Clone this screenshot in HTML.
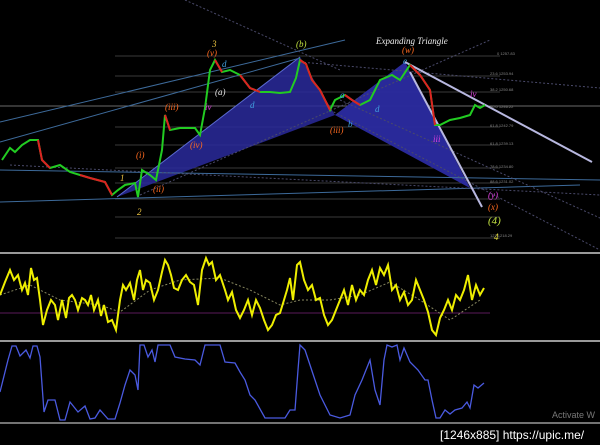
<!DOCTYPE html>
<html><head><meta charset="utf-8"><style>
html,body{margin:0;padding:0;background:#000;}
svg{display:block;font-family:"Liberation Serif",serif;}
</style></head><body>
<svg width="600" height="445" viewBox="0 0 600 445" xmlns="http://www.w3.org/2000/svg">
<rect width="600" height="445" fill="#000"/>
<!-- fib horizontal lines -->
<g stroke="#3a3a3a" stroke-width="1">
<line x1="115" y1="56" x2="500" y2="56"/>
<line x1="115" y1="76" x2="500" y2="76"/>
<line x1="115" y1="92" x2="500" y2="92"/>
<line x1="115" y1="127" x2="500" y2="127"/>
<line x1="115" y1="145" x2="500" y2="145"/>
<line x1="115" y1="168" x2="500" y2="168"/>
<line x1="115" y1="183" x2="500" y2="183"/>
<line x1="115" y1="199" x2="500" y2="199"/>
<line x1="115" y1="217" x2="500" y2="217"/>
<line x1="115" y1="238" x2="500" y2="238"/>
</g>
<line x1="0" y1="106" x2="600" y2="106" stroke="#6a6a6a"/>
<!-- harmonic shapes -->
<polygon points="117,197 300,57 335,115" fill="#2a2a9c" opacity="0.85"/>
<polygon points="300,57 335,115 405,62 470,188 335,115" fill="#2a2a9c" opacity="0.85"/>
<polygon points="335,115 405,62 470,188" fill="#2a2a9c" opacity="0.85"/>
<line x1="117" y1="197" x2="300" y2="57" stroke="#5a6ad0"/>
<!-- channels -->
<g stroke="#3d6a9a" stroke-width="1" fill="none">
<line x1="0" y1="122" x2="345" y2="40"/>
<line x1="0" y1="142" x2="300" y2="58"/>
<line x1="0" y1="202" x2="580" y2="185"/>
<line x1="0" y1="170" x2="600" y2="180"/>
</g>
<g stroke="#4a4a6a" stroke-width="1" stroke-dasharray="2,2" fill="none">
<line x1="10" y1="165" x2="600" y2="195"/>
<line x1="140" y1="195" x2="490" y2="40"/>
<line x1="330" y1="110" x2="600" y2="250"/>
<line x1="300" y1="62" x2="600" y2="88"/>
<line x1="185" y1="0" x2="340" y2="70"/>
<line x1="340" y1="100" x2="600" y2="218"/>
</g>
<!-- white lines -->
<line x1="405" y1="62" x2="592" y2="162" stroke="#b8b8e0" stroke-width="2"/>
<line x1="410" y1="72" x2="482" y2="207" stroke="#b8b8e0" stroke-width="2"/>
<!-- price -->
<polyline fill="none" stroke="#22cc22" stroke-width="2" points="2,160 10,148 15,152 22,145 30,140 38,140 42,160 50,168 60,165 70,172 80,175 90,178 105,182 112,195 118,190 125,185 135,183 138,197 142,170 150,175 156,180 162,150 165,115 170,130 180,128 195,128 200,135 205,108 210,70 215,60 222,72 230,70 240,75 250,88 260,92 270,92 280,93 290,92 296,78 300,60 306,64 312,80 320,90 330,110 335,100 345,95 352,100 360,105 370,100 380,80 392,75 400,80 410,65 420,75 430,90 435,125 440,125 450,120 460,118 470,115 475,105 480,108 485,105"/>
<g stroke="#dd2222" stroke-width="2" fill="none">
<polyline points="38,140 42,160 50,168"/><polyline points="80,175 90,178 105,182 112,195"/>
<polyline points="165,115 170,130"/><polyline points="215,60 222,72"/><polyline points="240,75 250,88 260,92"/>
<polyline points="300,60 306,64 312,80 320,90 330,110"/><polyline points="345,95 352,100 360,105"/>
<polyline points="410,65 420,75 430,90 435,125"/>
</g>
<!-- labels -->
<g font-size="9" font-style="italic">
<text x="376" y="44" fill="#eee" font-size="9">Expanding Triangle</text>
<text x="212" y="47" fill="#e8c040">3</text>
<text x="296" y="47" fill="#c0e040">(b)</text>
<text x="120" y="181" fill="#e8c040">1</text>
<text x="137" y="215" fill="#e8c040">2</text>
<text x="488" y="224" fill="#c0e040" font-size="11">(4)</text>
<text x="494" y="240" fill="#e8e040">4</text>
<text x="207" y="56" fill="#ff6a20">(v)</text>
<text x="165" y="110" fill="#ff6a20">(iii)</text>
<text x="136" y="158" fill="#ff6a20">(i)</text>
<text x="402" y="53" fill="#ff6a20">(w)</text>
<text x="330" y="133" fill="#ff6a20">(iii)</text>
<text x="190" y="148" fill="#ff6a20">(iv)</text>
<text x="153" y="192" fill="#ff6a20">(ii)</text>
<text x="488" y="210" fill="#ff6a20">(x)</text>
<text x="488" y="198" fill="#e040e0">(y)</text>
<text x="215" y="95" fill="#e0e0e0">(a)</text>
<text x="222" y="67" fill="#40a0e0">d</text><text x="250" y="108" fill="#40a0e0">d</text>
<text x="340" y="98" fill="#40a0e0">a</text><text x="348" y="127" fill="#40a0e0">b</text>
<text x="375" y="112" fill="#40a0e0">d</text><text x="403" y="64" fill="#40a0e0">e</text>
<text x="470" y="97" fill="#e040e0">iv</text><text x="433" y="142" fill="#e040e0">iii</text>
<text x="205" y="110" fill="#e040e0">iv</text>
</g>
<g font-size="4" fill="#888" font-family="Liberation Sans,sans-serif">
<text x="497" y="55">0 1257.83</text><text x="490" y="75">23.6 1253.94</text><text x="490" y="91">38.2 1250.68</text>
<text x="490" y="108">50.0 1246.22</text><text x="490" y="127">61.8 1242.79</text><text x="490" y="145">61.8 1239.13</text>
<text x="490" y="168">78.6 1234.80</text><text x="490" y="183">88.6 1231.02</text><text x="490" y="237">127 1218.29</text>
</g>
<!-- separators -->
<line x1="0" y1="253" x2="600" y2="253" stroke="#999" stroke-width="2"/>
<line x1="0" y1="341" x2="600" y2="341" stroke="#999" stroke-width="2"/>
<line x1="0" y1="423" x2="600" y2="423" stroke="#999" stroke-width="1.5"/>
<line x1="0" y1="313" x2="490" y2="313" stroke="#5a1a5a"/>
<!-- yellow osc -->
<polyline fill="none" stroke="#888860" stroke-dasharray="2,2" points="0,295 30,285 60,300 100,305 120,312 150,290 180,280 220,278 250,290 280,305 300,300 330,300 360,295 390,282 420,300 450,320 480,300"/>
<polyline fill="none" stroke="#eeee00" stroke-width="2" points="0,295 5,282 10,270 14,280 18,275 22,290 25,283 28,295 31,268 34,280 37,278 40,300 43,325 47,310 51,300 55,305 58,320 62,300 66,318 69,298 72,295 75,300 78,310 82,298 85,300 88,305 91,295 94,310 98,300 101,316 104,305 108,322 112,320 116,330 120,300 123,285 126,290 130,283 134,300 137,280 140,270 143,290 146,280 150,283 154,300 158,290 162,272 165,260 168,265 171,275 174,288 178,290 182,280 186,275 190,282 194,285 198,305 202,270 206,258 209,265 212,262 216,280 220,275 225,290 228,300 232,292 236,310 240,318 244,310 248,300 252,315 256,300 260,308 264,320 268,330 272,325 276,315 280,313 284,300 287,290 290,278 293,300 297,265 300,262 304,280 308,290 312,285 316,300 320,298 324,315 328,325 332,320 336,310 340,300 344,290 348,305 352,285 356,300 360,290 364,295 368,280 372,270 376,285 380,268 384,275 388,265 392,290 396,285 400,300 404,292 408,305 412,300 416,280 420,290 424,300 428,312 432,330 436,335 440,318 444,310 448,300 452,310 456,295 460,300 464,290 468,275 472,300 476,285 480,295 484,288"/>
<!-- blue osc -->
<polyline fill="none" stroke="#4a5ae0" stroke-width="1.3" points="0,392 8,360 12,346 16,346 20,356 26,350 30,358 33,346 37,346 40,357 44,412 48,400 55,400 60,420 65,420 70,402 78,412 85,406 90,419 95,418 100,410 108,419 115,419 120,403 125,385 130,370 135,375 138,390 140,345 144,345 148,357 152,350 155,362 158,345 170,345 175,357 185,359 195,360 200,365 205,345 220,345 225,362 235,363 240,372 245,380 250,395 255,400 265,418 275,418 285,418 290,410 295,410 298,370 300,345 305,350 310,365 320,395 330,415 340,418 350,415 355,395 362,380 370,360 375,390 380,405 384,360 387,345 392,347 397,345 400,360 404,348 410,362 418,370 425,380 428,380 432,400 436,418 440,418 445,410 450,414 455,410 462,408 467,402 470,408 474,385 478,388 484,383"/>
<text x="552" y="418" fill="#777" font-size="9" font-family="Liberation Sans,sans-serif">Activate W</text>
<text x="440" y="439" fill="#fff" font-size="12" font-family="Liberation Sans,sans-serif">[1246x885] https://upic.me/</text>
</svg>
</body></html>
